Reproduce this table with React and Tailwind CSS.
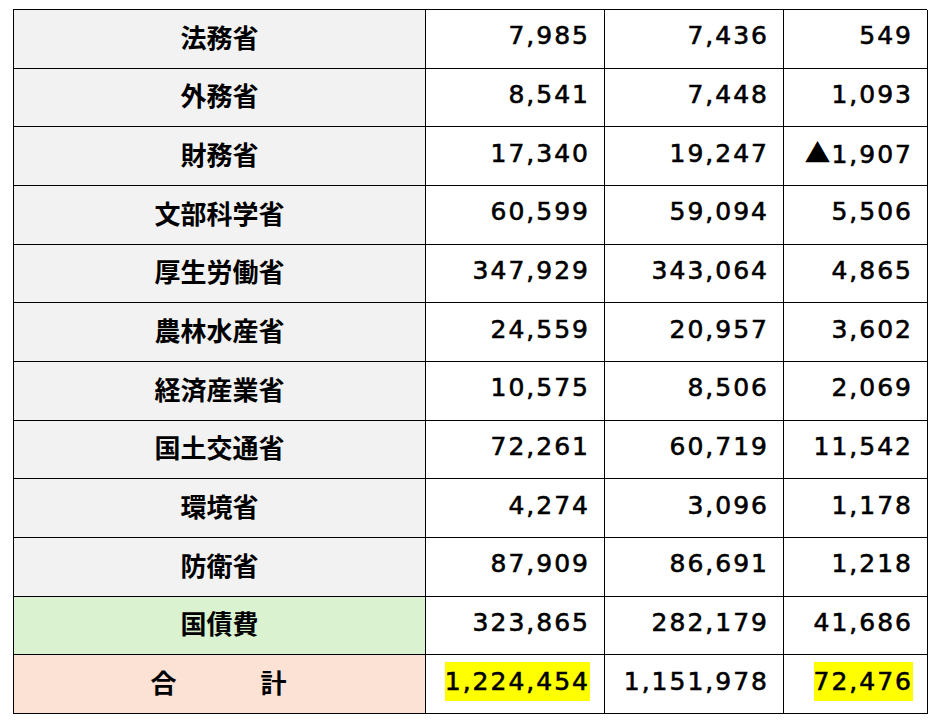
import React from "react";

const rows = [
  ["法務省", "7,985", "7,436", "549"],
  ["外務省", "8,541", "7,448", "1,093"],
  ["財務省", "17,340", "19,247", "▲1,907"],
  ["文部科学省", "60,599", "59,094", "5,506"],
  ["厚生労働省", "347,929", "343,064", "4,865"],
  ["農林水産省", "24,559", "20,957", "3,602"],
  ["経済産業省", "10,575", "8,506", "2,069"],
  ["国土交通省", "72,261", "60,719", "11,542"],
  ["環境省", "4,274", "3,096", "1,178"],
  ["防衛省", "87,909", "86,691", "1,218"],
];

const jp = "font-['Noto_Sans_CJK_JP',sans-serif]";
const num = "font-['DejaVu_Sans',sans-serif] text-[25px] text-black tracking-[2px] [-webkit-text-stroke:0.6px_black]";

function NumCell({ v, hl }) {
  const neg = v.startsWith("▲");
  return (
    <div className="border-r border-b border-black bg-white flex items-center justify-end pr-[14px] pb-[6px] h-[58.67px]">
      <span className={`${num} leading-[39px] ${hl ? "bg-[#ffff00]" : ""}`}>
        {neg ? (
          <>
            <span className="font-['Noto_Sans_CJK_JP',sans-serif] text-[26px] tracking-[1px] [-webkit-text-stroke:0px]">▲</span>
            {v.slice(1)}
          </>
        ) : (
          v
        )}
      </span>
    </div>
  );
}

function LabelCell({ children, bg }) {
  return (
    <div className={`border-r border-b border-black ${bg} flex items-center justify-center pb-[5px] h-[58.67px] ${jp} font-bold text-[26px] text-black`}>
      {children}
    </div>
  );
}

export default function App() {
  return (
    <div className="w-[936px] h-[720px] bg-white pt-[9px] pl-[13px]">
      <div className="grid grid-cols-[412px_179px_179px_144px] border-l border-t border-black w-[914px]">
        {rows.map((r, i) => (
          <React.Fragment key={i}>
            <LabelCell bg="bg-[#f2f2f2]">{r[0]}</LabelCell>
            <NumCell v={r[1]} />
            <NumCell v={r[2]} />
            <NumCell v={r[3]} />
          </React.Fragment>
        ))}
        <LabelCell bg="bg-[#daf2d0]">国債費</LabelCell>
        <NumCell v="323,865" />
        <NumCell v="282,179" />
        <NumCell v="41,686" />
        <LabelCell bg="bg-[#fbe2d5]">
          <span className="flex gap-[84px] pr-[2px]">
            <span>合</span>
            <span>計</span>
          </span>
        </LabelCell>
        <NumCell v="1,224,454" hl />
        <NumCell v="1,151,978" />
        <NumCell v="72,476" hl />
      </div>
    </div>
  );
}
